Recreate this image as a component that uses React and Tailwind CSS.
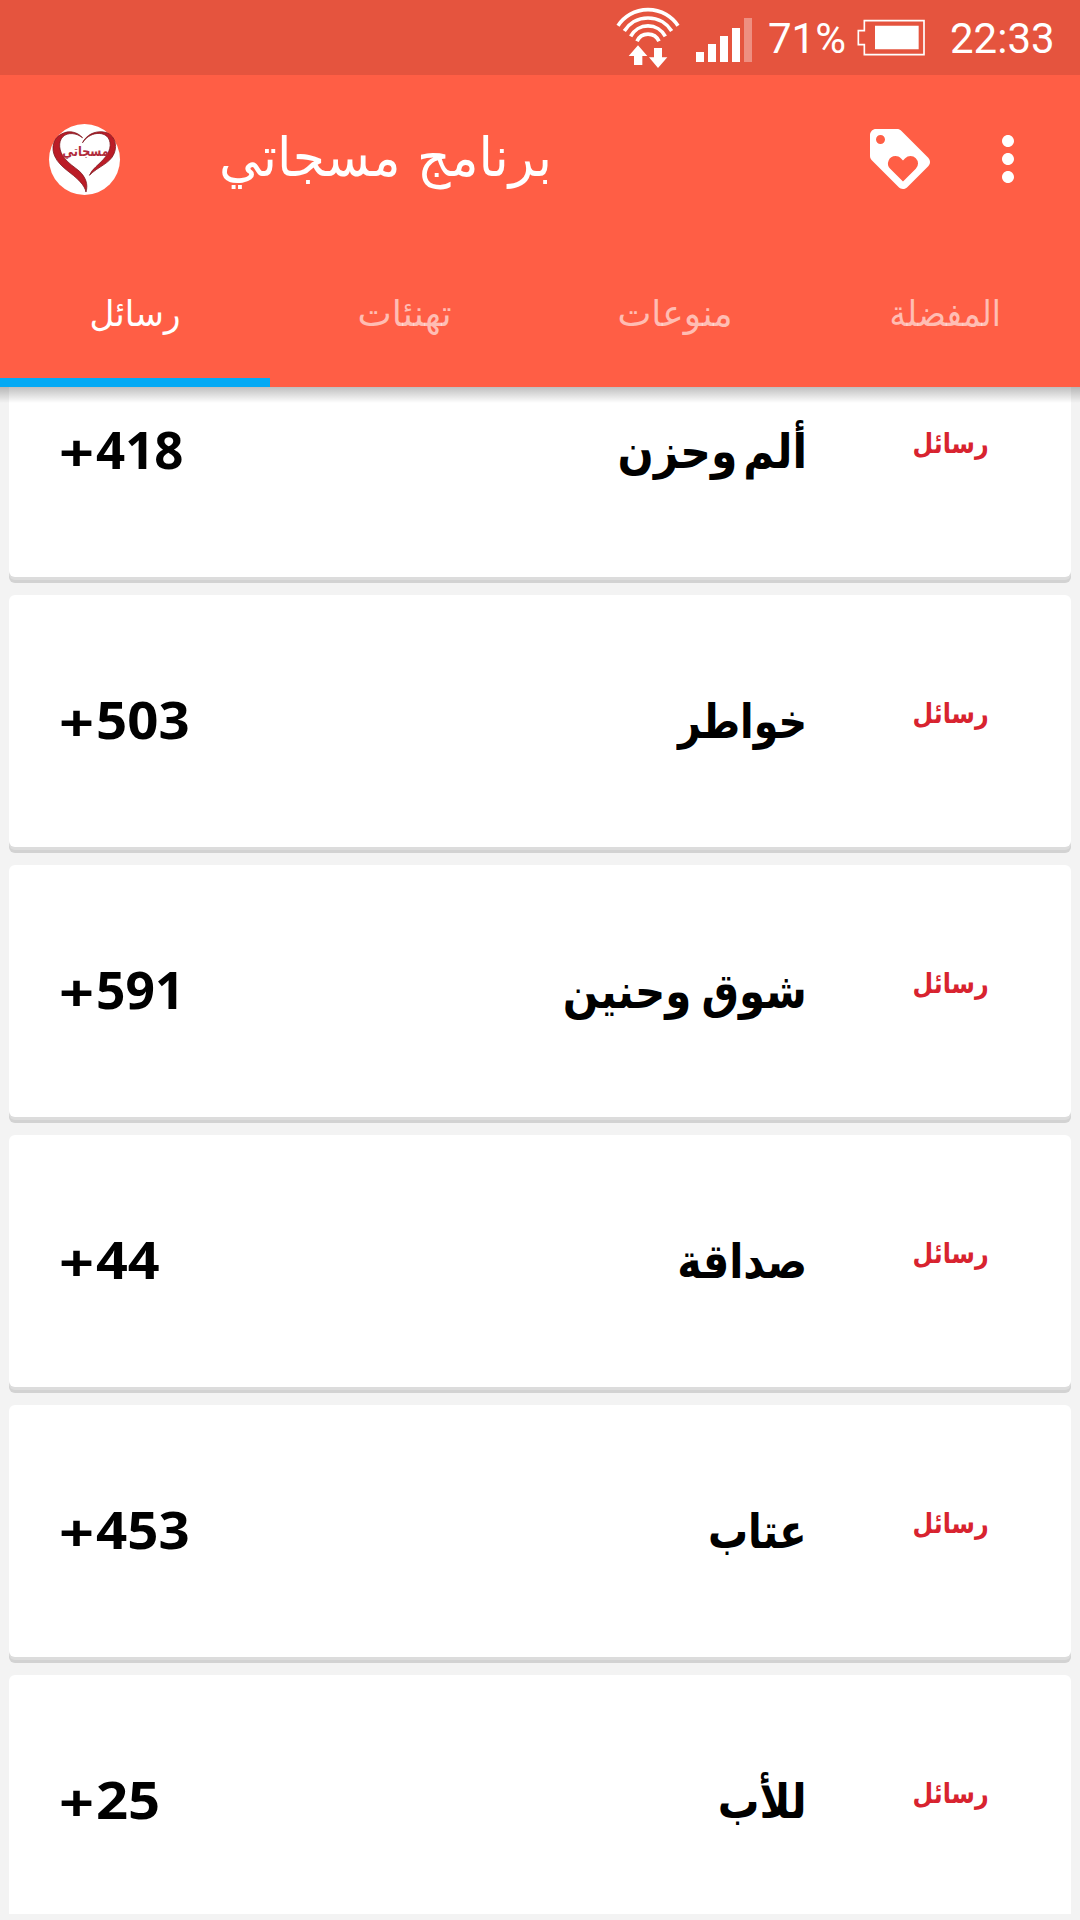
// App.jsx
import { MdLoyalty, MdMoreVert } from "react-icons/md";

const tabs = [
  { label: "رسائل", active: true, fit: "scale-x-95" },
  { label: "تهنئات", active: false, fit: "scale-x-[1.01]" },
  { label: "منوعات", active: false, fit: "" },
  { label: "المفضلة", active: false, fit: "scale-x-[0.91]" },
];

const categories = [
  { title: "ألم وحزن", count: 418, titleFit: "scale-x-[0.885] [word-spacing:-10px]", countFit: "scale-x-[0.98]" },
  { title: "خواطر", count: 503, titleFit: "scale-x-[0.827]", countFit: "scale-x-[1.05]" },
  { title: "شوق وحنين", count: 591, titleFit: "scale-x-[0.875] [word-spacing:-5px]", countFit: "scale-x-[0.99]" },
  { title: "صداقة", count: 44, titleFit: "scale-x-[0.86]", countFit: "scale-x-[1.07]" },
  { title: "عتاب", count: 453, titleFit: "scale-x-[0.832]", countFit: "scale-x-[1.05]" },
  { title: "للأب", count: 25, titleFit: "scale-x-[0.866]", countFit: "scale-x-[1.08]" },
];

const WifiIcon = () => (
  <svg viewBox="48 0 192 225" className="w-16 h-[75px]" fill="none" stroke="#fff" strokeWidth="11">
    <path d="M54 77A108 108 0 0 1 234 77" />
    <path d="M73 93A84 84 0 0 1 215 93" />
    <path d="M92 109A59 59 0 0 1 196 109" />
    <path d="M111 124A36 36 0 0 1 177 124" />
    <path d="M114 136L142 168H127V195H102V168H86ZM162 144H186V172H202L174 204L147 172H162Z" fill="#fff" stroke="none" />
  </svg>
);

const SignalIcon = () => (
  <svg viewBox="285 0 174 225" className="w-[58px] h-[75px] ml-[15px]" fill="#fff">
    <path d="M288 156h24v30h-24zM324 132h24v54h-24zM360 108h24v78h-24zM396 84h24v102h-24z" />
    <path d="M432 54h24v132h-24z" opacity="0.35" />
  </svg>
);

const BatteryIcon = () => (
  <svg viewBox="771 0 207 225" className="w-[69px] h-[75px]">
    <path d="M793 62H972V164H793V134H775V92H793Z" fill="none" stroke="#fff" strokeWidth="5" />
    <path d="M825 77h131v71h-131z" fill="#fff" />
  </svg>
);

const Logo = () => (
  <svg viewBox="0 0 72 72" className="size-[71px] ml-[49px] mr-px overflow-visible">
    <circle cx="36" cy="36" r="36" fill="#fff" />
    <path
      d="M34 14C29 8 20 6 13 10C4 14 2 25 6 33C11 44 24 50 31 58C35 62 37 66 37.5 69C40 61 37 54 31 48C25 43 20 40 16 35C10 28 9 18 14 13C19 8 28 9 34 14Z"
      fill="#bb1c27"
      stroke="#7d1820"
      strokeWidth="0.8"
    />
    <path
      d="M34 19C38 11 46 7 55 8C66 9 70 21 66 30C62 40 50 43 41 52C44 45 51 41 55 36C62 29 64 20 60 14C55 7 41 8 34 19Z"
      fill="#bb1c27"
      stroke="#7d1820"
      strokeWidth="0.8"
    />
    <text
      x="37"
      y="32"
      textAnchor="middle"
      textLength="47"
      lengthAdjust="spacingAndGlyphs"
      className="font-['DejaVu_Sans',sans-serif] text-[14px] font-bold fill-[#b02c3c]"
    >
      مسجاتي
    </text>
  </svg>
);

const StatusBar = () => (
  <div className="flex h-[75px] shrink-0 bg-[#e5543e] pl-[616px] font-[Roboto,sans-serif] text-[42px] leading-[78px] text-white">
    <WifiIcon />
    <SignalIcon />
    <span className="w-[104px] pl-[15px]">71%</span>
    <BatteryIcon />
    <span className="ml-[24px]">22:33</span>
  </div>
);

const CategoryCard = ({ category }) => (
  <div className="flex h-[252px] shrink-0 rounded-md bg-white shadow-[0_3px_0_#dcdcdc,0_6px_0_#d2d2d2]">
    <p className="flex w-[240px] pl-[50px] pt-[89px] font-['Noto_Sans',sans-serif] text-[52px] font-bold leading-[70px] text-black">
      <span className="mt-[3px] w-[37px] origin-left scale-x-[1.18]">+</span>
      <span className={`origin-left ${category.countFit}`}>{category.count}</span>
    </p>
    <h3
      dir="rtl"
      className="ml-auto w-[400px] pt-[91px] font-['DejaVu_Sans',sans-serif] text-[48px] font-bold leading-[70px] text-black whitespace-nowrap"
    >
      <span className={`inline-block origin-right ${category.titleFit}`}>{category.title}</span>
    </h3>
    <p
      dir="rtl"
      className="mr-[82px] w-[182px] pt-[94px] font-['DejaVu_Sans',sans-serif] text-[28px] font-bold leading-[50px] text-[#d8232f]"
    >
      <span className="inline-block origin-right scale-x-85">رسائل</span>
    </p>
  </div>
);

const App = () => {
  return (
    <div dir="ltr" className="flex h-[1920px] w-[1080px] flex-col overflow-hidden bg-[#f3f3f3]">
      <StatusBar />

      {/* App bar */}
      <header className="relative z-10 flex h-[312px] shrink-0 flex-col bg-[#ff5e45] text-white">
        <div className="flex h-[168px] items-center">
          <Logo />
          <h1
            dir="rtl"
            className="w-[431px] pb-1 font-['DejaVu_Sans',sans-serif] text-[52px] leading-[70px] whitespace-nowrap"
          >
            <span className="inline-block origin-right scale-y-105">برنامج مسجاتي</span>
          </h1>
          <MdLoyalty className="ml-auto size-[72px]" />
          <MdMoreVert className="ml-9 mr-9 size-[72px]" />
        </div>

        {/* Tabs */}
        <nav className="grid h-36 grid-cols-4 font-['DejaVu_Sans',sans-serif] text-[36px] leading-[50px]">
          {tabs.map((tab) => (
            <div
              key={tab.label}
              dir="rtl"
              className={`flex justify-center border-b-9 pt-[46px] ${
                tab.active ? "border-[#03a9f4] text-white" : "border-transparent text-white/60"
              }`}
            >
              <span className={`h-[50px] ${tab.fit}`}>{tab.label}</span>
            </div>
          ))}
        </nav>

        {/* Drop shadow over the list */}
        <div className="absolute inset-x-0 top-full h-4 bg-linear-to-b from-black/25 to-transparent" />
      </header>

      {/* Category list, scrolled so the first card sits under the app bar */}
      <main className="flex h-[1527px] flex-col justify-start overflow-hidden px-[9px]">
        <div className="-mt-[62px] flex flex-col gap-[18px]">
          {categories.map((category) => (
            <CategoryCard key={category.title} category={category} />
          ))}
        </div>
      </main>
      <div className="h-1.5 shrink-0 bg-[#f3f3f3]" />
    </div>
  );
};

export default App;
